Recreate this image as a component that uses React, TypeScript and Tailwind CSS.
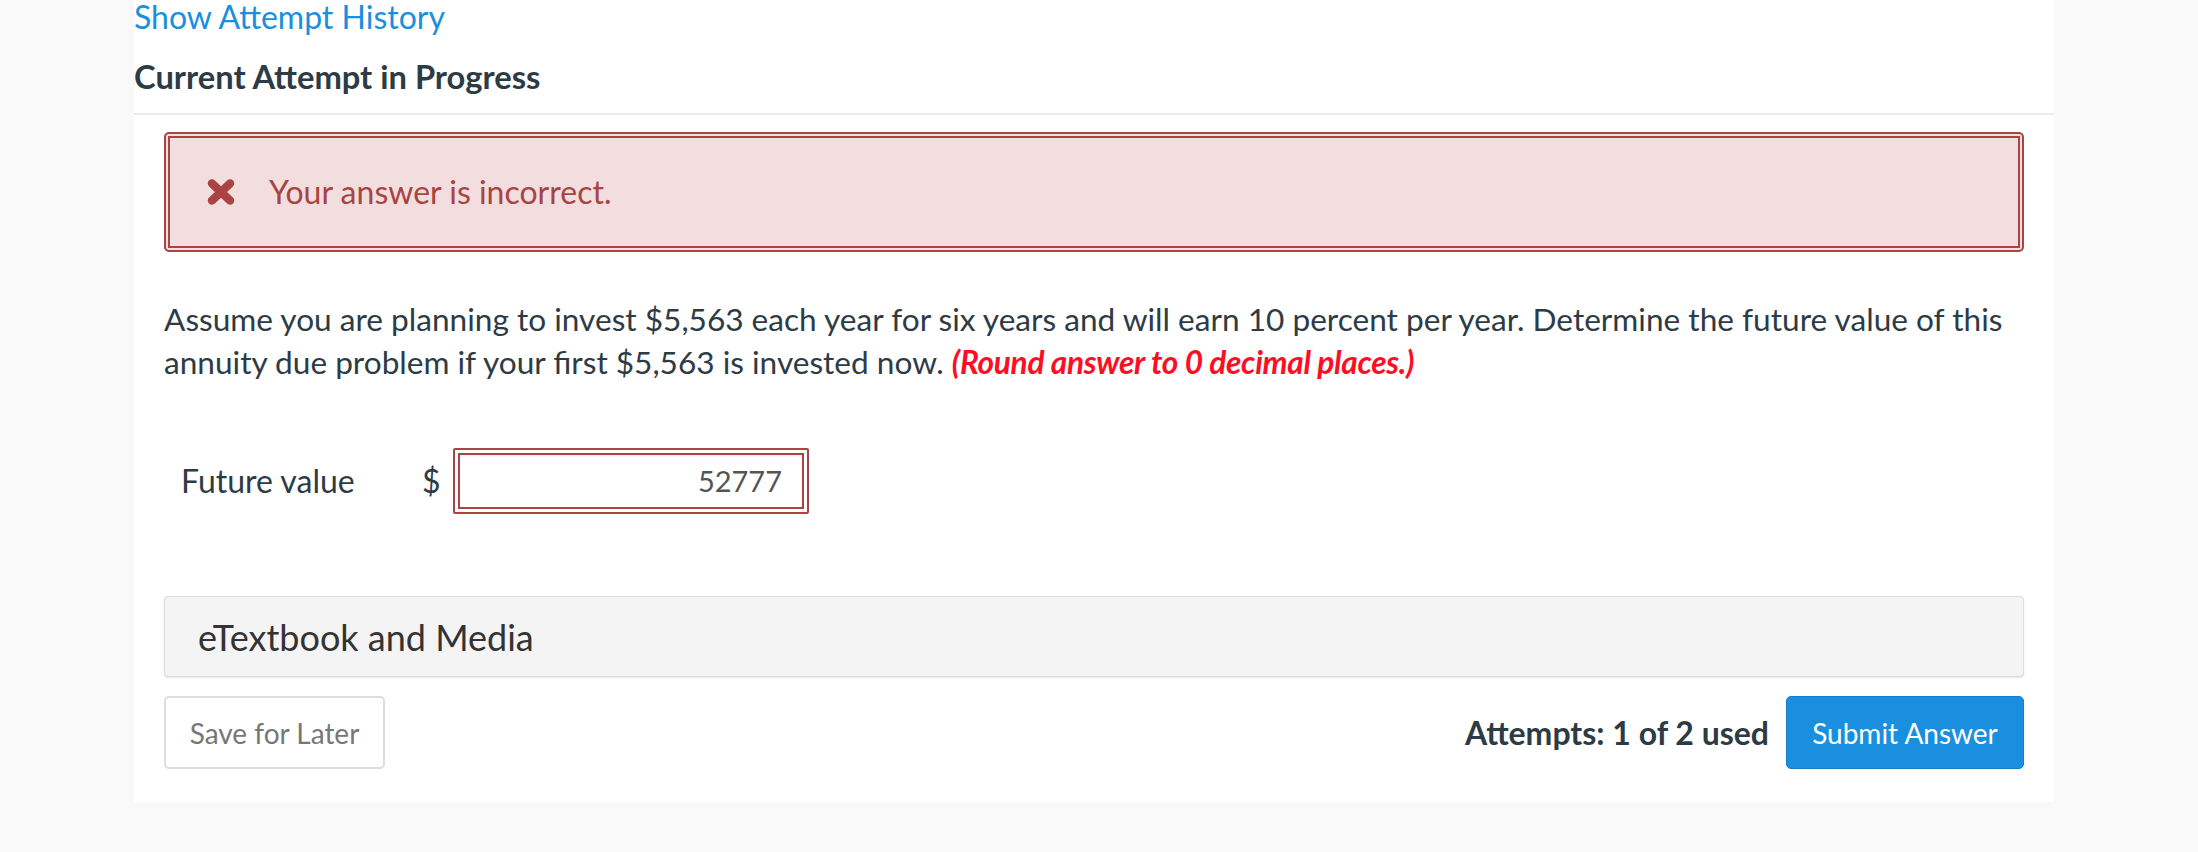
function IncorrectIcon() {
  return (
    <svg width="30" height="28" viewBox="0 0 30 28" aria-hidden="true">
      <path d="M6 5.5 L24 22.5 M24 5.5 L6 22.5" stroke="#a94442" strokeWidth="8.5" strokeLinecap="round" />
    </svg>
  );
}

export default function App() {
  return (
    <div className="min-h-screen bg-[#f9f9f9] font-['Lato',sans-serif] text-[#2d3b45]">
      <div className="ml-[134px] w-[1920px] bg-white">
        <div className="flex h-[113px] flex-col">
          <a href="#" className="text-[32px] leading-[34px] text-[#1a8fe0]">
            Show Attempt History
          </a>
          <h2 className="mt-[23px] text-[32.7px] font-bold leading-[40px]">Current Attempt in Progress</h2>
        </div>
        <div className="h-[2px] bg-[#ebebeb]" />

        <div className="px-[30px] pt-[17px] pb-[33px]">
          <div className="rounded-[5px] border-2 border-[#a94442] bg-[#f2dede] p-[2px]">
            <div className="flex h-[112px] items-center border-2 border-[#a94442] pl-[36px]">
              <IncorrectIcon />
              <span className="ml-[33px] text-[32px] text-[#a94442]">Your answer is incorrect.</span>
            </div>
          </div>

          <p className="mt-[46px] text-[31.6px] leading-[43px]">
            Assume you are planning to invest $5,563 each year for six years and will earn 10 percent per year.
            Determine the future value of this annuity due problem if your first $5,563 is invested now.{' '}
            <span className="font-bold italic tracking-[-0.3px] text-[#ff0d23]">
              (Round answer to 0 decimal places.)
            </span>
          </p>

          <div className="mt-[62px] flex h-[70px] items-center">
            <span className="ml-[17px] w-[241px] text-[32px]">Future value</span>
            <span className="w-[31px] text-[32px]">$</span>
            <div className="rounded-[2px] border-2 border-[#a94442] bg-white p-[3px]">
              <div className="flex h-[56px] w-[346px] items-center justify-end border-2 border-[#a94442] pr-[20px] text-[29px] text-[#555] shadow-[inset_0_1px_2px_rgba(0,0,0,0.08)]">
                52777
              </div>
            </div>
          </div>

          <div className="mt-[80px] flex h-[81px] items-center rounded-[4px] border border-[#dcdcdc] bg-[#f4f4f4] pl-[33px] shadow-[0_1px_2px_rgba(0,0,0,0.1)]">
            <span className="text-[36px] text-[#333]">eTextbook and Media</span>
          </div>

          <div className="mt-[19px] flex h-[73px] items-center justify-between">
            <button className="h-full w-[221px] rounded-[5px] border-2 border-[#dddddd] bg-white text-[28px] text-[#777]">
              Save for Later
            </button>
            <div className="flex h-full items-center">
              <span className="text-[32px] font-bold">Attempts: 1 of 2 used</span>
              <button className="ml-[17px] h-full w-[238px] rounded-[5px] border border-[#157fc6] bg-[#1a8fdf] text-[28px] text-white">
                Submit Answer
              </button>
            </div>
          </div>
        </div>
      </div>
    </div>
  );
}
